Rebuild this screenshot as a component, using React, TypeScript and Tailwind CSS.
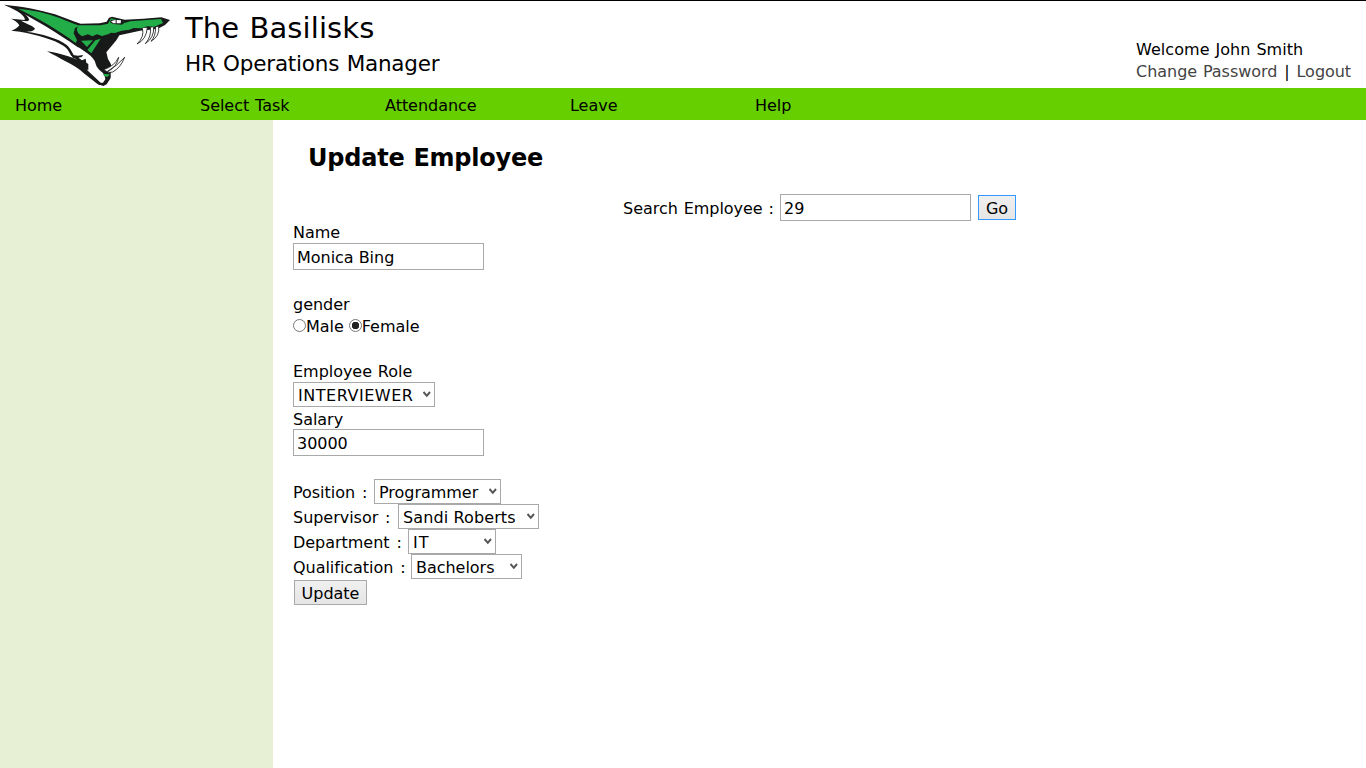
import React, { useState } from "react";

function Logo() {
  return (
    <svg className="h-[87px] w-[174px] shrink-0" viewBox="0 3 522 261" aria-hidden="true">
      {/* neck and head silhouette */}
      <path fill="#181a19" d="M12 14 C60 18 129 31 165 43 C191 52 220 65 242 71 L299 70 L320 65 L327 53 L336 50 L374 59 L430 56 L484 52 L510 60 L495 75 L478 84 L462 88 L420 92 L358 106 L349 121 L319 157 L324 177 L333 193 L332 234 L320 253 L310 258 L294 253 L262 223 L250 180 L258 160 C200 115 130 73 50 29 Z" />
      {/* frill */}
      <path fill="#181a19" d="M12 14 L50 24 C72 38 86 51 88 60 L82 64 L63 62 C78 71 98 76 105 86 C101 93 90 95 78 95 C125 101 175 115 199 134 C212 144 216 158 222 166 L214 168 C208 158 205 147 190 137 C160 118 115 105 60 95 L34 92 C43 89 53 84 58 76 C53 66 44 61 33 56 L74 60 C78 48 55 33 12 14Z" />
      {/* trailing spike */}
      <path fill="#181a19" d="M141 154 C181 160 217 171 241 184 L266 202 L306 248 L300 256 C272 238 251 218 235 206 C213 192 178 174 141 154Z" />
      <path fill="#fff" d="M222 140 L238 143 L262 160 C276 170 285 180 288 194 C292 208 307 215 313 224 L316 238 L309 248 L302 248 L262 211 L258 192 L248 178 L222 164Z" />
      <path fill="#181a19" d="M207 150 L219 165 L234 167 L250 165 L245 171 L235 173 L246 181 L257 176 L259 188 L265 192 L265 211 L245 197 L249 192 L232 184 L228 177 L218 173Z" />
      <path fill="#22ad49" d="M54 26 C95 29 137 38 179 54 C201 63 220 72 240 77 L225 84 L221 100 L231 121 L227 129 C177 91 115 55 54 26Z" />
      <path fill="#22ad49" d="M239 76 L301 76 L324 71 L333 55 L370 63 L374 69 L391 64 L483 57 L489 69 L463 80 L442 79 L424 85 L401 84 L388 89 L365 92 L345 99 L333 98 L324 103 L306 108 L291 103 L277 109 L264 103 L246 109 L235 100 L230 89 L233 80Z" />
      <path fill="#22ad49" d="M243 122 L279 121 L261 141Z M286 121 L302 116 L274 160 L262 150Z M309 222 L330 223 L322 231 L312 228Z" />
      <path fill="#181a19" d="M333 60 L365 57 L374 68 L365 74 L340 72 L330 67Z" />
      <path fill="#fff" d="M333 64 Q346 58 363 61 L362 70 L340 70Z" />
      <path fill="#181a19" d="M347 59 L350 59 L350 71 L347 71Z" />
      <path fill="#fff" stroke="#181a19" strokeWidth="2.5" d="M427 84 Q434 111 411 132 Q439 119 442 83 M451 83 Q455 109 436 131 Q463 113 461 81 M467 81 Q467 109 453 124 Q480 108 476 80 M311 209 Q344 198 356 172 Q352 198 323 216Z M322 214 Q350 199 374 172 Q362 203 338 216 L325 218Z" />
    </svg>
  );
}

function TextInput({ value, label }: { value: string; label: string }) {
  return <input aria-label={label} defaultValue={value} className="block h-[27px] w-[191px] border border-[#a9a9a9] bg-white pl-[3px] pt-px outline-none" />;
}

function Select({ value, label, className }: { value: string; label: string; className: string }) {
  return (
    <div className={`relative h-[25px] ${className}`}>
      <select aria-label={label} defaultValue={value} className="block h-full w-full appearance-none border border-[#a9a9a9] bg-white pl-1 pt-[2px] outline-none">
        <option>{value}</option>
      </select>
      <svg className="pointer-events-none absolute right-1 top-[9px] h-[7px] w-2" viewBox="0 0 8 7" fill="none" stroke="#555" strokeWidth="2">
        <path d="M.5 1 L3.8 4.8 L7 1" />
      </svg>
    </div>
  );
}

const tasks = [
  { label: "Position :", value: "Programmer", gap: "w-[81px]", width: "w-[127px]" },
  { label: "Supervisor :", value: "Sandi Roberts", gap: "w-[105px]", width: "w-[141px] tracking-[0.12px]" },
  { label: "Department :", value: "IT", gap: "w-[115px]", width: "w-[88px] tracking-[1px]" },
  { label: "Qualification :", value: "Bachelors", gap: "w-[118px]", width: "w-[111px]" },
];

export default function App() {
  const [gender, setGender] = useState("Female");
  return (
    <div className="flex h-screen flex-col overflow-hidden whitespace-nowrap bg-white font-['DejaVu_Sans',sans-serif] text-base leading-[22px] tracking-[-0.03px] text-black [word-spacing:0.8px]">
      <header className="flex h-[88px] shrink-0 border-t border-black">
        <Logo />
        <div className="ml-[11px] mt-2">
          <h1 className="text-[29px] leading-[38px] tracking-[0.12px]">The Basilisks</h1>
          <p className="text-[21.5px] leading-[34px] tracking-[-0.21px]">HR Operations Manager</p>
        </div>
        <div className="ml-auto mr-[15px] mt-[38px] w-[215px]">
          <p className="tracking-[0.05px]">Welcome John Smith</p>
          <p><a className="text-[#444]" href="#">Change Password</a><span className="mx-px"> | </span><a className="text-[#444]" href="#">Logout</a></p>
        </div>
      </header>
      <nav className="flex h-8 shrink-0 items-center bg-[#66cf00] pl-[15px] pt-1">
        {["Home", "Select Task", "Attendance", "Leave", "Help"].map((item) => (
          <a key={item} href="#" className="w-[185px]">{item}</a>
        ))}
      </nav>
      <div className="flex min-h-0 flex-1">
        <aside className="w-[273px] shrink-0 bg-[#e7f0d4]" />
        <main className="flex-1 pl-5">
          <h2 className="ml-[15px] mt-[22px] text-2xl font-bold leading-8 tracking-[-0.22px]">Update Employee</h2>
          <div className="ml-[330px] mt-5 flex h-[27px] items-center">
            <label className="w-[157px] pt-0.5">Search Employee :</label>
            <TextInput label="Search Employee" value="29" />
            <button className="ml-[7px] h-[25px] w-[38px] border border-[#3399ff] bg-linear-to-b from-[#f0f0f0] to-[#e5e5e5] pt-[2px]">Go</button>
          </div>
          <div className="h-[22px] pt-px">Name</div>
          <TextInput label="Name" value="Monica Bing" />
          <div className="mt-6 h-[21px]">gender</div>
          <div className="flex h-[22px] gap-[5px]">
            {["Male", "Female"].map((g) => (
              <label key={g} className="flex items-start pt-px">
                <input type="radio" name="gender" checked={gender === g} onChange={() => setGender(g)} className="mt-[3px] size-[13px] appearance-none rounded-full border border-[#777] bg-white checked:bg-[radial-gradient(circle,#222_0_3.5px,white_4px)]" />
                {g}
              </label>
            ))}
          </div>
          <div className="mt-6 h-[21px]">Employee Role</div>
          <Select label="Employee Role" value="INTERVIEWER" className="w-[142px] tracking-[0.53px]" />
          <div className="h-[22px] pt-0.5">Salary</div>
          <TextInput label="Salary" value="30000" />
          <div className="mt-[23px]">
            {tasks.map((t) => (
              <div key={t.label} className="flex h-[25px] items-center">
                <span className={`pt-0.5 ${t.gap}`}>{t.label.slice(0, -1)}<span className="ml-px">:</span></span>
                <Select label={t.label} value={t.value} className={t.width} />
              </div>
            ))}
          </div>
          <button className="ml-px mt-px block h-[25px] w-[73px] border border-[#a9a9a9] bg-linear-to-b from-[#f0f0f0] to-[#e5e5e5] pt-[2px]">Update</button>
        </main>
      </div>
    </div>
  );
}
